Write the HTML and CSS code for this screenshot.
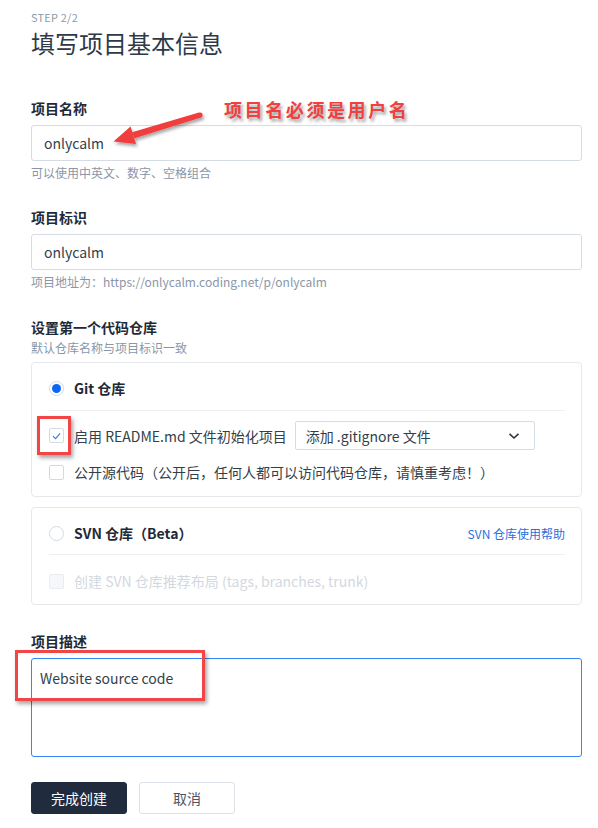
FILE: index.html
```html
<!DOCTYPE html>
<html lang="zh-CN">
<head>
<meta charset="utf-8">
<title>填写项目基本信息</title>
<link rel="stylesheet" href="styles.css">
</head>
<body>
<div class="page">
  <div class="step">STEP 2/2</div>
  <h1 class="title">填写项目基本信息</h1>

  <div class="field first">
    <div class="label">项目名称</div>
    <div class="input">onlycalm</div>
    <div class="hint">可以使用中英文、数字、空格组合</div>
  </div>

  <div class="field">
    <div class="label">项目标识</div>
    <div class="input">onlycalm</div>
    <div class="hint">项目地址为：https://onlycalm.coding.net/p/onlycalm</div>
  </div>

  <div class="section">
    <div class="label">设置第一个代码仓库</div>
    <div class="sub">默认仓库名称与项目标识一致</div>
  </div>

  <div class="repo-box git">
    <div class="row radio-row">
      <span class="radio checked"></span>
      <span class="repo-name">Git 仓库</span>
    </div>
    <div class="divider"></div>
    <div class="row select-row">
      <span class="checkbox checked">
        <svg viewBox="0 0 14 14" width="14" height="14"><path d="M3.2 7.2 L6 9.8 L10.8 4.2" fill="none" stroke="#2f7bf0" stroke-width="1.2"/></svg>
      </span>
      <span class="opt">启用 README.md 文件初始化项目</span>
      <div class="select">
        <span>添加 .gitignore 文件</span>
        <svg viewBox="0 0 12 8" width="12" height="8"><path d="M1.5 1.8 L6 6 L10.5 1.8" fill="none" stroke="#2a3340" stroke-width="1.6"/></svg>
      </div>
    </div>
    <div class="row check-row public">
      <span class="checkbox"></span>
      <span class="opt">公开源代码（公开后，任何人都可以访问代码仓库，请慎重考虑！）</span>
    </div>
  </div>

  <div class="repo-box svn">
    <div class="row radio-row">
      <span class="radio"></span>
      <span class="repo-name">SVN 仓库（Beta）</span>
      <span class="help">SVN 仓库使用帮助</span>
    </div>
    <div class="divider"></div>
    <div class="row check-row disabled">
      <span class="checkbox"></span>
      <span class="opt">创建 SVN 仓库推荐布局 (tags, branches, trunk)</span>
    </div>
  </div>

  <div class="field desc">
    <div class="label">项目描述</div>
    <div class="textarea">Website source code</div>
  </div>

  <div class="actions">
    <button class="btn primary">完成创建</button>
    <button class="btn">取消</button>
  </div>

  <div class="note">项目名必须是用户名</div>
  <svg class="arrow" viewBox="100 100 120 60" width="120" height="60">
    <defs>
      <filter id="sh" x="-20%" y="-40%" width="150%" height="190%">
        <feDropShadow dx="1.5" dy="2.5" stdDeviation="1.5" flood-color="#000" flood-opacity="0.35"/>
      </filter>
    </defs>
    <g filter="url(#sh)" fill="#f03c3c">
      <path d="M199 112.6 L201 117.4 L134.5 138.2 L132 132.2 Z" />
      <circle cx="200" cy="115" r="2.6"/>
      <polygon points="113.5,141.5 130.5,126.4 136,144"/>
    </g>
  </svg>
  <div class="mark mark-check"></div>
  <div class="mark mark-desc"></div>
</div>
</body>
</html>
```

FILE: styles.css
```css
* { box-sizing: border-box; }
html, body { margin: 0; padding: 0; background: #fff; }
body {
  font-family: "Noto Sans CJK SC", "Noto Sans", sans-serif;
  font-size: 14px;
  color: #323f4b;
}
.page {
  position: relative;
  width: 598px;
  height: 828px;
  padding: 9px 16px 0 31px;
}
.step {
  font-size: 11px;
  line-height: 16px;
  color: #8e99a9;
  letter-spacing: 0.2px;
}
.title {
  margin: 2px 0 0;
  font-size: 24px;
  line-height: 32px;
  font-weight: 400;
  color: #2e3a47;
}
.label {
  font-size: 14px;
  line-height: 20px;
  font-weight: 700;
  color: #1f2a37;
}
.field.first { margin-top: 39px; }
.field { margin-top: 25px; }
.input {
  margin-top: 7px;
  height: 36px;
  border: 1px solid #d6dce4;
  border-radius: 3px;
  padding: 0 12px;
  line-height: 34px;
  font-size: 14px;
  color: #323f4b;
}
.hint {
  margin-top: 3px;
  font-size: 12px;
  line-height: 18px;
  color: #8a96a8;
}
.section { margin-top: 26px; }
.sub {
  margin-top: 2px;
  font-size: 12px;
  line-height: 18px;
  color: #8a96a8;
}
.repo-box {
  border: 1px solid #e5e9ee;
  border-radius: 4px;
  padding: 15px 16px 14px 17px;
}
.repo-box.git { margin-top: 5px; }
.repo-box.svn { margin-top: 10px; padding-bottom: 13px; }
.row {
  display: flex;
  align-items: center;
  height: 20px;
}
.divider {
  height: 1px;
  background: #eceff3;
  margin-top: 12px;
}
.svn .divider { margin-top: 11px; }
.select-row { height: 29px; margin-top: 10px; }
.public { margin-top: 12px; }
.svn .check-row { margin-top: 16px; }
.radio {
  width: 15px;
  height: 15px;
  border-radius: 50%;
  border: 1px solid #d3dae3;
  background: #fff;
  flex: none;
  display: flex;
  align-items: center;
  justify-content: center;
}
.radio.checked::after {
  content: "";
  width: 9px;
  height: 9px;
  border-radius: 50%;
  background: #0a66f5;
}
.repo-name {
  margin-left: 10px;
  font-weight: 700;
  color: #1f2a37;
}
.help {
  margin-left: auto;
  font-size: 12px;
  color: #2b6fde;
}
.checkbox {
  width: 15px;
  height: 15px;
  border: 1px solid #d3dae3;
  border-radius: 2px;
  background: #fff;
  flex: none;
  display: flex;
  align-items: center;
  justify-content: center;
}
.checkbox svg { display: block; }
.opt {
  margin-left: 10px;
  color: #323f4b;
  white-space: nowrap;
}
.disabled .checkbox { background: #f5f7fa; border-color: #e9edf1; }
.disabled .opt { color: #d3d8df; }
.select {
  margin-left: 8px;
  width: 240px;
  height: 29px;
  border: 1px solid #d6dce4;
  border-radius: 2px;
  display: flex;
  align-items: center;
  justify-content: space-between;
  padding: 0 14px 0 10px;
  color: #323f4b;
}
.select svg { display: block; }
.field.desc { margin-top: 26px; }
.textarea {
  margin-top: 7px;
  height: 99px;
  border: 1px solid #3385f8;
  border-radius: 3px;
  padding: 9px 8px;
  line-height: 20px;
  color: #323f4b;
}
.actions {
  margin-top: 25px;
  display: flex;
  gap: 12px;
}
.btn {
  width: 96px;
  height: 32px;
  border: 1px solid #dde2e8;
  border-radius: 3px;
  background: #fff;
  font-family: inherit;
  font-size: 14px;
  color: #4b5563;
  padding: 0;
}
.btn.primary {
  background: #202b3d;
  border-color: #202b3d;
  color: #fff;
}
.note {
  position: absolute;
  left: 224px;
  top: 99px;
  font-size: 18px;
  line-height: 20px;
  letter-spacing: 2.6px;
  font-weight: 700;
  color: #f0403f;
  text-shadow: 2px 3px 3px rgba(0, 0, 0, 0.35);
}
.arrow {
  position: absolute;
  left: 100px;
  top: 100px;
}
.mark {
  position: absolute;
  border: 3px solid #f24646;
  box-shadow: 2px 3px 4px rgba(0, 0, 0, 0.35);
}
.mark-check { left: 37px; top: 416px; width: 34px; height: 39px; }
.mark-desc { left: 15px; top: 650px; width: 190px; height: 51px; }
```
